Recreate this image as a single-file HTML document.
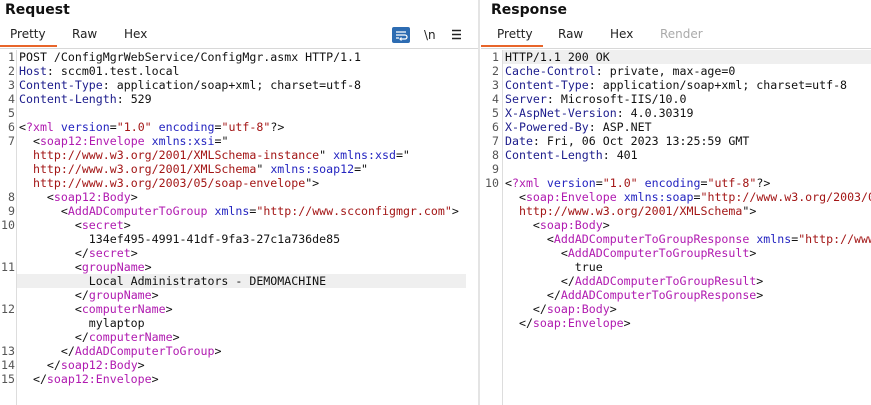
<!DOCTYPE html>
<html><head><style>
html,body{margin:0;width:871px;height:405px;overflow:hidden}
body{background:#fff;position:relative;font-family:"DejaVu Sans","Liberation Sans",sans-serif;}
.t{position:absolute;font-weight:bold;font-size:14px;color:#111;top:2px}
.tab{position:absolute;top:27px;font-size:12px;color:#222}
.ul{position:absolute;top:45px;height:2px;background:#e8652a}
.hl{position:absolute;top:48px;height:1px;background:#d8d8d8}
pre{margin:0;position:absolute;font-family:"DejaVu Sans Mono","Liberation Mono",monospace;font-size:11.6px;line-height:14px;color:#111}
.ln{color:#555;text-align:right;width:14px}
.g{position:absolute;width:1px;background:#ddd;top:50px;height:355px}
.h{color:#1c1c8c}.tg{color:#b01ab0}.a{color:#2424c0}.v{color:#a31616}
.row{position:absolute;height:14px;background:#efefef}
.clip{position:absolute;overflow:hidden;top:0;height:405px}
</style></head><body>
<div class="t" style="left:5px">Request</div>
<div class="t" style="left:491px">Response</div>
<div class="tab" style="left:10px">Pretty</div>
<div class="tab" style="left:72px">Raw</div>
<div class="tab" style="left:124px">Hex</div>
<div class="tab" style="left:497px">Pretty</div>
<div class="tab" style="left:558px">Raw</div>
<div class="tab" style="left:610px">Hex</div>
<div class="tab" style="left:660px;color:#aaa">Render</div>
<div class="hl" style="left:0;width:478px"></div>
<div class="hl" style="left:481px;width:390px"></div>
<div class="ul" style="left:0;width:57px"></div>
<div class="ul" style="left:481px;width:62px"></div>
<div style="position:absolute;left:478px;top:0;width:2px;height:405px;background:#e4e4e4"></div>
<svg style="position:absolute;left:392px;top:27px" width="18" height="16"><rect width="18" height="16" rx="2" fill="#2d6cb2"/><path d="M4 5h10M4 8h9a2 2 0 0 1 0 4h-4M4 11h3" stroke="#fff" stroke-width="1.3" fill="none"/><path d="M9.5 10.5l-1.5 1.5 1.5 1.5" stroke="#fff" stroke-width="1.2" fill="none"/></svg>
<div style="position:absolute;left:424px;top:28px;font-size:12px;color:#222">\n</div>
<svg style="position:absolute;left:452px;top:29px" width="10" height="11"><path d="M0 1.5h9M0 5.5h9M0 9.5h9" stroke="#222" stroke-width="1.5"/></svg>
<div class="row" style="left:17px;top:274px;width:449px"></div>
<div class="row" style="left:503px;top:50px;width:368px"></div>
<div class="g" style="left:16px"></div>
<div class="g" style="left:502px"></div>
<pre class="ln" style="left:1px;top:50px">1
2
3
4
5
6
7



8
9
10


11


12


13
14
15</pre>
<div class="clip" style="left:0;width:476px">
<pre style="left:19px;top:50px">POST /ConfigMgrWebService/ConfigMgr.asmx HTTP/1.1
<span class="h">Host</span>: sccm01.test.local
<span class="h">Content-Type</span>: application/soap+xml; charset=utf-8
<span class="h">Content-Length</span>: 529

&lt;<span class="tg">?xml</span> <span class="a">version</span>=<span class="v">"1.0"</span> <span class="a">encoding</span>=<span class="v">"utf-8"</span>?&gt;
  &lt;<span class="tg">soap12:Envelope</span> <span class="a">xmlns:xsi</span>="
  <span class="v">http://www.w3.org/2001/XMLSchema-instance</span>" <span class="a">xmlns:xsd</span>="
  <span class="v">http://www.w3.org/2001/XMLSchema</span>" <span class="a">xmlns:soap12</span>="
  <span class="v">http://www.w3.org/2003/05/soap-envelope</span>"&gt;
    &lt;<span class="tg">soap12:Body</span>&gt;
      &lt;<span class="tg">AddADComputerToGroup</span> <span class="a">xmlns</span>=<span class="v">"http://www.scconfigmgr.com"</span>&gt;
        &lt;<span class="tg">secret</span>&gt;
          134ef495-4991-41df-9fa3-27c1a736de85
        &lt;/<span class="tg">secret</span>&gt;
        &lt;<span class="tg">groupName</span>&gt;
          Local Administrators - DEMOMACHINE
        &lt;/<span class="tg">groupName</span>&gt;
        &lt;<span class="tg">computerName</span>&gt;
          mylaptop
        &lt;/<span class="tg">computerName</span>&gt;
      &lt;/<span class="tg">AddADComputerToGroup</span>&gt;
    &lt;/<span class="tg">soap12:Body</span>&gt;
  &lt;/<span class="tg">soap12:Envelope</span>&gt;</pre>
</div>
<pre class="ln" style="left:485px;top:50px">1
2
3
4
5
6
7
8
9
10</pre>
<div class="clip" style="left:503px;width:368px">
<pre style="left:2px;top:50px">HTTP/1.1 200 OK
<span class="h">Cache-Control</span>: private, max-age=0
<span class="h">Content-Type</span>: application/soap+xml; charset=utf-8
<span class="h">Server</span>: Microsoft-IIS/10.0
<span class="h">X-AspNet-Version</span>: 4.0.30319
<span class="h">X-Powered-By</span>: ASP.NET
<span class="h">Date</span>: Fri, 06 Oct 2023 13:25:59 GMT
<span class="h">Content-Length</span>: 401

&lt;<span class="tg">?xml</span> <span class="a">version</span>=<span class="v">"1.0"</span> <span class="a">encoding</span>=<span class="v">"utf-8"</span>?&gt;
  &lt;<span class="tg">soap:Envelope</span> <span class="a">xmlns:soap</span>=<span class="v">"http://www.w3.org/2003/0</span>
  <span class="v">http://www.w3.org/2001/XMLSchema</span>"&gt;
    &lt;<span class="tg">soap:Body</span>&gt;
      &lt;<span class="tg">AddADComputerToGroupResponse</span> <span class="a">xmlns</span>=<span class="v">"http://www</span>
        &lt;<span class="tg">AddADComputerToGroupResult</span>&gt;
          true
        &lt;/<span class="tg">AddADComputerToGroupResult</span>&gt;
      &lt;/<span class="tg">AddADComputerToGroupResponse</span>&gt;
    &lt;/<span class="tg">soap:Body</span>&gt;
  &lt;/<span class="tg">soap:Envelope</span>&gt;</pre>
</div>
</body></html>
